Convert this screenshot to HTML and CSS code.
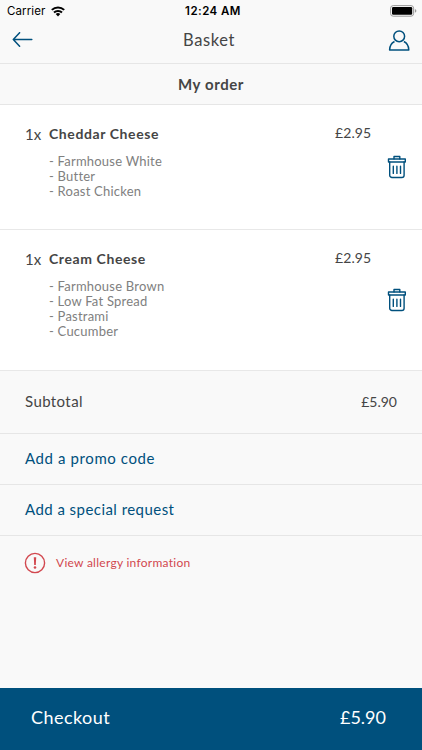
FILE: index.html
```
<!DOCTYPE html>
<html lang="en">
<head>
<meta charset="utf-8">
<title>Basket</title>
<link rel="stylesheet" href="styles.css">
</head>
<body>
<svg class="defs" width="0" height="0" aria-hidden="true">
  <symbol id="trash" viewBox="0 0 20 24">
    <g fill="none" stroke="currentColor" stroke-width="1.4" stroke-linejoin="round" stroke-linecap="round">
      <path d="M7 3.9V1.5h5.8v2.4"/>
      <path d="M1.5 4h16.8v3H1.5z"/>
      <path d="M2.7 7v13.2a2.3 2.3 0 0 0 2.3 2.3h9.8a2.3 2.3 0 0 0 2.3-2.3V7"/>
      <path d="M6.3 11.2v7.2M9.9 11.2v7.2M13.5 11.2v7.2"/>
    </g>
  </symbol>
</svg>
<main class="screen">
  <div class="status">
    <div class="carrier"><span>Carrier</span>
      <svg width="14" height="11" viewBox="0 0 14 11"><g fill="none" stroke="#000" stroke-width="2"><path d="M.8 3.9a8.9 8.9 0 0 1 12.4 0"/><path d="M3 6.5a5.8 5.8 0 0 1 8 0"/></g><path d="M7 10.4 4.7 8.1a3.3 3.3 0 0 1 4.6 0z"/></svg>
    </div>
    <span class="time">12:24 AM</span>
    <svg class="battery" width="27" height="12" viewBox="0 0 27 12"><rect x=".6" y=".6" width="23" height="10.6" rx="2.6" fill="none" stroke="#999" stroke-width="1"/><rect x="2" y="2" width="20.2" height="7.8" rx="1.2"/><path d="M24.9 4.1q1.5.6 1.5 1.8t-1.5 1.8z" fill="#999"/></svg>
  </div>
  <header class="nav">
    <svg width="22" height="16" viewBox="0 0 22 16" fill="none" stroke="#00507d" stroke-width="1.5" stroke-linecap="round" stroke-linejoin="round"><path d="M19.8 7.5H1.3M7.6.7 1.3 7.5l6.3 6.8"/></svg>
    <h1>Basket</h1>
    <svg width="22" height="22" viewBox="0 0 22 22" fill="none" stroke="#00507d" stroke-width="1.5" stroke-linejoin="round"><circle cx="11.2" cy="7.3" r="5.4"/><path d="M6.5 12.5C3.7 14 1.7 17 1.6 20.9h19.2c-.1-3.9-2.1-6.9-4.9-8.4"/></svg>
  </header>
  <h2 class="heading"><span>My order</span></h2>
  <section class="item first">
    <span class="qty">1x</span>
    <div class="details">
      <h3>Cheddar Cheese</h3>
      <ul><li>- Farmhouse White</li><li>- Butter</li><li>- Roast Chicken</li></ul>
    </div>
    <span class="price">£2.95</span>
    <svg class="trash" width="20" height="24"><use href="#trash"/></svg>
  </section>
  <section class="item second">
    <span class="qty">1x</span>
    <div class="details">
      <h3>Cream Cheese</h3>
      <ul><li>- Farmhouse Brown</li><li>- Low Fat Spread</li><li>- Pastrami</li><li>- Cucumber</li></ul>
    </div>
    <span class="price">£2.95</span>
    <svg class="trash" width="20" height="24"><use href="#trash"/></svg>
  </section>
  <div class="row subtotal"><span>Subtotal</span><span class="amount">£5.90</span></div>
  <div class="row link"><span class="promo">Add a promo code</span></div>
  <div class="row link"><span class="request">Add a special request</span></div>
  <div class="allergy">
    <svg width="22" height="22" viewBox="0 0 22 22"><circle cx="11" cy="11" r="9.6" fill="none" stroke="#d2484f" stroke-width="1.4"/><path d="M9.8 5.3h2.4l-.4 7.6h-1.6z" fill="#d2484f"/><circle cx="11" cy="15.5" r="1.3" fill="#d2484f"/></svg>
    <span>View allergy information</span>
  </div>
  <footer class="checkout"><span class="label">Checkout</span><span class="total">£5.90</span></footer>
</main>
</body>
</html>
```
FILE: styles.css
```
* { box-sizing: border-box; margin: 0; padding: 0; }
body { font-family: Lato, "Open Sans", sans-serif; color: #454545; background: #f9f9f9; }
svg { display: block; }
.defs { position: absolute; }
.screen { width: 422px; height: 750px; display: flex; flex-direction: column; overflow: hidden; }
.status { height: 22px; flex: none; display: grid; grid-template-columns: 1fr auto 1fr; align-items: center; padding: 0 5px 0 7px; font: 11.5px/22px Inter, sans-serif; color: #000; }
.carrier { display: flex; align-items: center; gap: 6px; letter-spacing: .1px; }
.time { font-weight: 600; letter-spacing: .45px; padding-left: 2px; }
.battery { justify-self: end; }
.nav { height: 42px; flex: none; display: flex; align-items: center; justify-content: space-between; padding: 0 12px 6px 12px; border-bottom: 1px solid #e6e6e6; }
.nav h1 { font-size: 16.5px; font-weight: 400; letter-spacing: .6px; margin-right: 4px; }
.heading { height: 41px; flex: none; display: flex; align-items: center; justify-content: center; font-size: 15px; font-weight: 700; letter-spacing: .6px; border-bottom: 1px solid #e6e6e6; }
.item { flex: none; display: grid; grid-template-columns: 24px 1fr 52px 20px; padding: 19px 15px 0 25px; background: #fff; border-bottom: 1px solid #e8e8e8; }
.first { height: 125px; }
.second { height: 141px; }
.qty { font-size: 15px; line-height: 20px; letter-spacing: .1px; }
.item h3 { font-size: 14px; line-height: 20px; font-weight: 700; letter-spacing: .6px; }
.item ul { list-style: none; margin-top: 9.5px; font-size: 13px; line-height: 15.3px; letter-spacing: .22px; color: #808080; }
.price { font-size: 14px; line-height: 18px; letter-spacing: .1px; }
.trash { color: #00507d; margin-top: 31px; }
.second .trash { margin-top: 39px; }
.row { flex: none; height: 51px; display: flex; align-items: center; justify-content: space-between; padding: 0 25px 2px; border-bottom: 1px solid #e6e6e6; font-size: 15px; letter-spacing: .4px; }
.subtotal { height: 63px; }
.amount { font-size: 14px; letter-spacing: 0; }
.link { color: #00507d; }
.promo { letter-spacing: .6px; }
.request { letter-spacing: .45px; }
.allergy { flex: 1; display: flex; align-items: flex-start; gap: 10px; padding: 16px 24px; font-size: 12px; line-height: 22px; letter-spacing: .27px; color: #d2484f; }
.checkout { flex: none; height: 62px; display: flex; align-items: center; justify-content: space-between; padding: 0 36px 4px 31px; background: #00507d; color: #fff; font-size: 18px; }
.label { letter-spacing: .45px; }
.total { letter-spacing: 0; }
```
